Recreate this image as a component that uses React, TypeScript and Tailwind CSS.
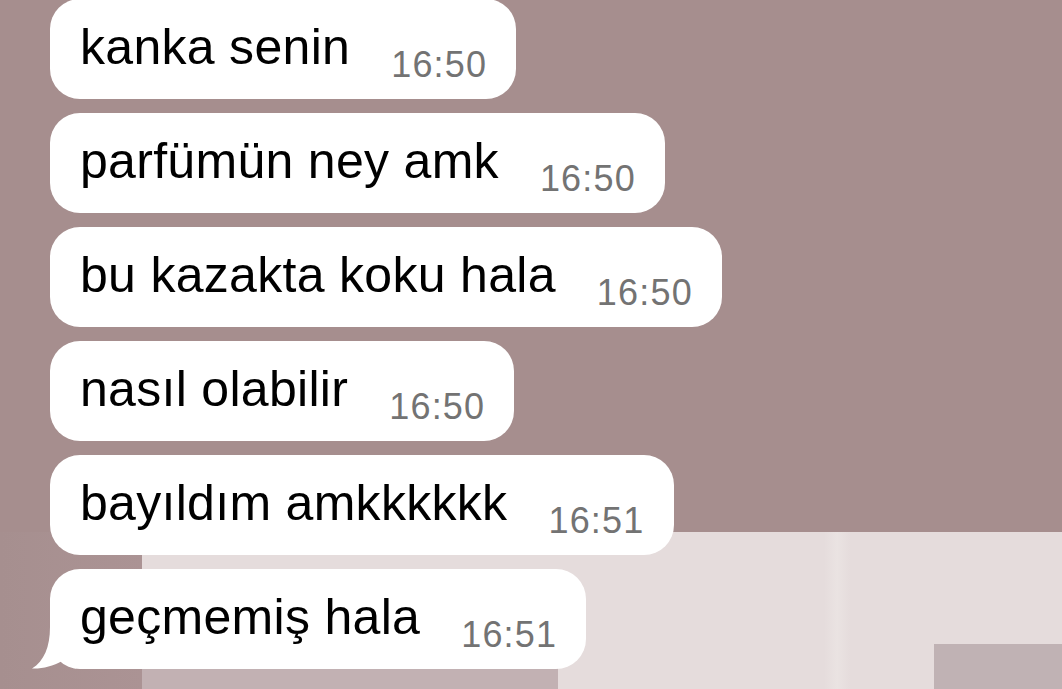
import React from "react";

const messages = [
  { text: "kanka senin", time: "16:50" },
  { text: "parfümün ney amk", time: "16:50" },
  { text: "bu kazakta koku hala", time: "16:50" },
  { text: "nasıl olabilir", time: "16:50" },
  { text: "bayıldım amkkkkkk", time: "16:51" },
  { text: "geçmemiş hala", time: "16:51" },
];

function Wallpaper() {
  return (
    <svg
      className="absolute inset-0 w-full h-full"
      viewBox="0 0 1062 689"
      preserveAspectRatio="none"
      aria-hidden
    >
      <defs>
        <linearGradient id="leftstrip" x1="0" x2="1" y1="0" y2="0">
          <stop offset="0" stopColor="#a68f8f" />
          <stop offset="1" stopColor="#ab9394" />
        </linearGradient>
        <linearGradient id="stripe" x1="0" x2="1" y1="0" y2="0">
          <stop offset="0" stopColor="#e5dcdc" />
          <stop offset="0.5" stopColor="#eae3e2" />
          <stop offset="1" stopColor="#e5dcdc" />
        </linearGradient>
      </defs>
      <rect x="0" y="0" width="1062" height="689" fill="#a68e8e" />
      <rect x="0" y="532" width="142" height="157" fill="url(#leftstrip)" />
      <rect x="142" y="532" width="920" height="157" fill="#e5dcdc" />
      <rect x="824" y="532" width="26" height="157" fill="url(#stripe)" />
      <rect x="142" y="668" width="416" height="21" fill="#c2b1b3" />
      <rect x="934" y="644" width="128" height="45" fill="#c0b2b4" />
    </svg>
  );
}

function Tail() {
  return (
    <svg
      className="absolute left-[-20px] bottom-0 w-[50px] h-[50px]"
      viewBox="-20 50 50 50"
      aria-hidden
    >
      <path
        d="M 2 50 L 0 50 L 0 58 C 0 78, -6 92, -18 99.5 C -8 100, 3 97, 12 92 C 16 95, 20 98, 26 99.5 L 26 80 L 2 80 Z"
        fill="#ffffff"
      />
    </svg>
  );
}

function Bubble({ text, time, last }: { text: string; time: string; last?: boolean }) {
  return (
    <div className="relative self-start flex items-start h-[100px] rounded-[30px] bg-white pl-[30px] pr-[29px]">
      {last && <Tail />}
      <span
        className="relative pt-[23px] text-[50px] leading-none tracking-[0.3px] text-black whitespace-nowrap"
        style={{ fontFamily: '"Liberation Sans", Arial, sans-serif' }}
      >
        {text}
      </span>
      <span
        className="relative ml-[41px] pt-[48px] text-[36px] leading-none tracking-[1.2px] text-[#737373] whitespace-nowrap"
        style={{ fontFamily: '"Liberation Sans", Arial, sans-serif' }}
      >
        {time}
      </span>
    </div>
  );
}

export default function App() {
  return (
    <div className="relative w-[1062px] h-[689px] overflow-hidden">
      <Wallpaper />
      <div className="relative flex flex-col gap-[14px] pl-[50px] mt-[-1px]">
        {messages.map((m, i) => (
          <Bubble key={i} text={m.text} time={m.time} last={i === messages.length - 1} />
        ))}
      </div>
    </div>
  );
}
